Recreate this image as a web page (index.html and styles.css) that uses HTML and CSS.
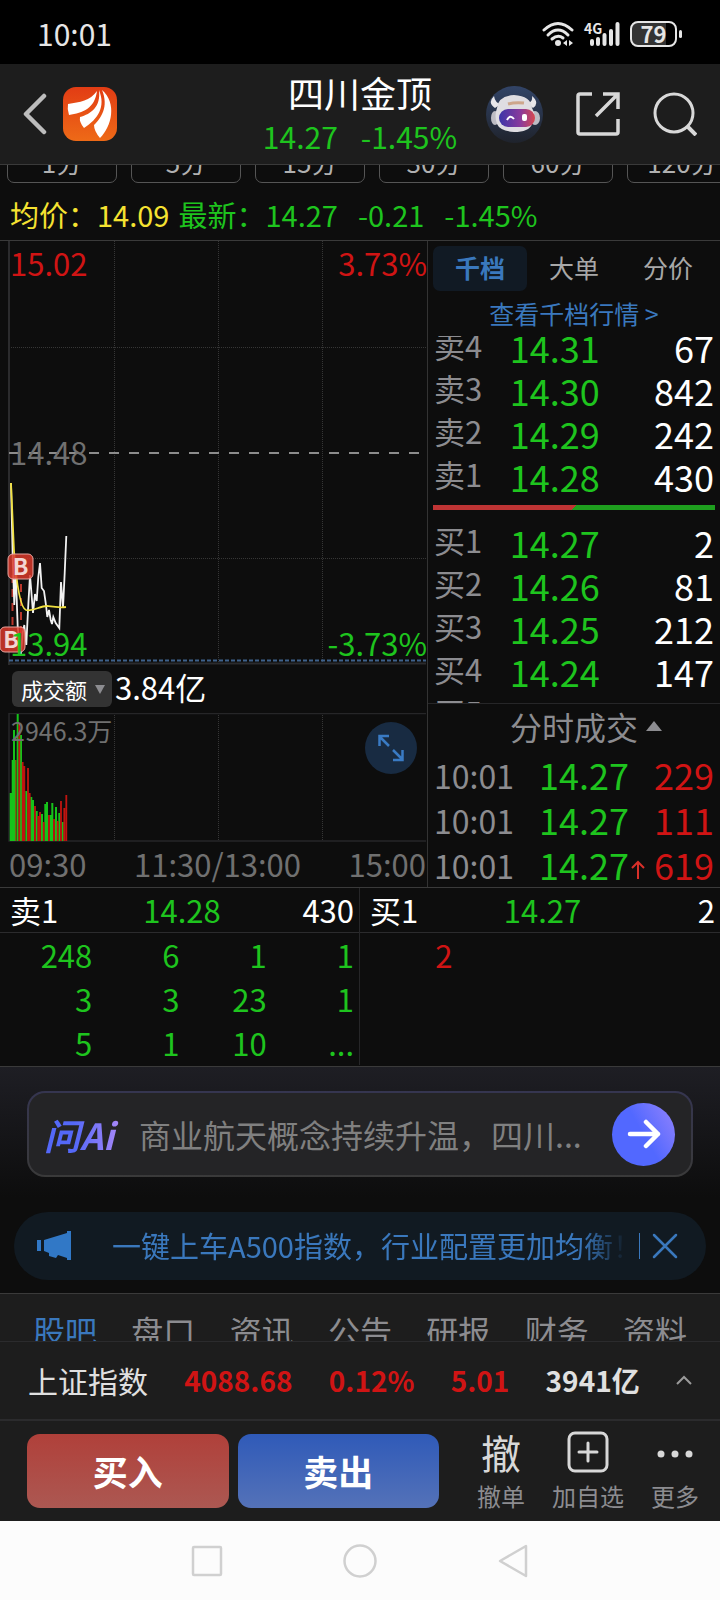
FILE: index.html
```html
<!DOCTYPE html>
<html lang="zh-CN">
<head>
    <meta charset="UTF-8">
    <meta name="viewport" content="width=device-width, initial-scale=1.0">
    <title>四川金顶</title>
    <link rel="stylesheet" href="styles.css">
</head>
<body>
    <div class="status-bar">
        <span>10:01</span>
        <div class="status-icons">
            <svg width="32" height="26" viewBox="0 0 32 26">
                <g fill="none" stroke="#e6e6e6" stroke-width="3" stroke-linecap="round">
                    <path d="M2 9Q16 -4 30 9"/>
                    <path d="M6 14Q16 4 26 14"/>
                    <path d="M10 18Q16 13 21 17"/>
                </g>
                <circle cx="16" cy="22" r="3" fill="#e6e6e6"/>
                <path d="M25 19v6l-4-3zM27 19v6l4-3z" fill="#e6e6e6"/>
            </svg>
            <div class="signal">
                <span class="signal-type">4G</span>
                <svg width="31" height="24" viewBox="0 0 31 24">
                    <path d="M3 19v3M9 17v5M15.500 13v9M22 9v13M28.500 2v20" stroke="#e6e6e6" stroke-width="4" stroke-linecap="round"/>
                </svg>
            </div>
            <span class="battery">79</span>
        </div>
    </div>

    <header class="header">
        <div class="header-left">
            <button type="button" class="icon-btn" aria-label="返回">
                <svg width="24" height="42" viewBox="0 0 24 42">
                    <path d="M21 3L3 21L21 39" fill="none" stroke="#bdbdbd" stroke-width="4.500" stroke-linecap="round" stroke-linejoin="round"/>
                </svg>
            </button>
            <svg width="54" height="54" viewBox="0 0 54 54">
                <defs>
                    <linearGradient id="logoBg" x1="0" y1="0" x2="0" y2="1">
                        <stop offset="0" stop-color="#e23c14"/>
                        <stop offset="1" stop-color="#ee6a17"/>
                    </linearGradient>
                </defs>
                <rect width="54" height="54" rx="13" fill="url(#logoBg)"/>
                <path d="M34 4C27 14 17 15 5 17Q4 22 6 28C20 26 32 21 34 4Z" fill="#fff"/>
                <path d="M36 3C38 20 28 27 17 30Q16 35 21 41C35 32 43 20 36 3Z" fill="#fff"/>
                <path d="M39 3C46 20 38 31 31 38Q31 44 37 51C49 39 54 16 39 3Z" fill="#fff"/>
            </svg>
        </div>
        <div class="header-title">
            <h1>四川金顶</h1>
            <div class="header-quote"><span>14.27</span><span>-1.45%</span></div>
        </div>
        <div class="header-right">
            <button type="button" class="icon-btn" aria-label="智能助手">
                <svg width="57" height="57" viewBox="0 0 57 57">
                    <defs>
                        <linearGradient id="robotBg" x1="0" y1="0" x2="0" y2="1">
                            <stop offset="0" stop-color="#324467"/>
                            <stop offset="1" stop-color="#1f232c"/>
                        </linearGradient>
                        <linearGradient id="visor">
                            <stop offset="0" stop-color="#3c36a8"/>
                            <stop offset="0.6" stop-color="#8a3a9c"/>
                            <stop offset="1" stop-color="#d8484e"/>
                        </linearGradient>
                    </defs>
                    <circle cx="28.500" cy="28.500" r="28.500" fill="url(#robotBg)"/>
                    <path d="M8 10Q1 17 9 22L15 18Q9 17 8 10ZM46 10Q54 17 47 22L41 17Q47 17 46 10Z" fill="#e8e6ea"/>
                    <ellipse cx="9" cy="32" rx="4" ry="7" fill="#bdbcc4"/>
                    <ellipse cx="49" cy="32" rx="5" ry="7" fill="#bdbcc4"/>
                    <path d="M11 22Q12 10 28 9Q45 10 46 22Q51 30 46 38Q43 46 28 46Q14 45 11 38Q8 30 11 22Z" fill="#dfdde2"/>
                    <path d="M22 18Q29 16 38 17" fill="none" stroke="#cda68c" stroke-width="3"/>
                    <rect x="13" y="23" width="36" height="18" rx="9" fill="url(#visor)"/>
                    <path d="M21 34Q24 28 28 33" fill="none" stroke="#fff" stroke-width="2"/>
                    <rect x="36" y="28" width="5" height="7" rx="2" fill="#fff"/>
                </svg>
            </button>
            <button type="button" class="icon-btn" aria-label="分享">
                <svg width="44" height="44" viewBox="0 0 44 44">
                    <path d="M16 2H4Q2 2 2 4V40Q2 42 4 42H40Q42 42 42 40V27M27 2H42V17M42 2L20 24" fill="none" stroke="#d8d8d8" stroke-width="3.500"/>
                </svg>
            </button>
            <button type="button" class="icon-btn" aria-label="搜索">
                <svg width="44" height="44" viewBox="0 0 44 44">
                    <circle cx="21" cy="21" r="19" fill="none" stroke="#d8d8d8" stroke-width="3"/>
                    <path d="M34 34L43 43" stroke="#d8d8d8" stroke-width="4"/>
                </svg>
            </button>
        </div>
    </header>

    <nav class="periods">
        <button type="button">1分</button>
        <button type="button">5分</button>
        <button type="button">15分</button>
        <button type="button">30分</button>
        <button type="button">60分</button>
        <button type="button">120分</button>
    </nav>

    <div class="summary">
        <span class="yellow">均价：14.09</span>
        <div class="summary-last green">
            <span>最新：14.27</span>
            <span>-0.21</span>
            <span>-1.45%</span>
        </div>
    </div>

    <main class="quote">
        <section class="chart">
            <div class="price-chart">
                <svg class="plot" viewBox="0 0 427 424" preserveAspectRatio="none">
                    <path d="M114.500 0V424M218.500 0V424M322.500 0V424M9 106.500H426M9 317.500H426" stroke="#363636" stroke-dasharray="1 1"/>
                    <path d="M9 0V424M9 422.500H426" fill="none" stroke="#2b2b2d" stroke-width="2"/>
                    <path d="M9 212H420" stroke="#8c8c8c" stroke-width="2" stroke-dasharray="10 10"/>
                    <path d="M9 419.500H426" stroke="#3f628c" stroke-width="2" stroke-dasharray="4 2"/>
                    <path d="M12.500 334V386M21 343V400" stroke="#b9372c" stroke-width="2" stroke-dasharray="8 6"/>
                    <polyline points="11,242 12.700,316 14.300,364 15.700,329 17.700,386 20.700,414 22.700,392 24.300,384 26.300,404 28,369 30,334 32,359 33,372 35,353 36.700,360 38.300,336 40,322 41.700,347 44,350 46,364 47.300,376 49,369 50.700,379 52,383 53.300,376 55.700,382 59.300,387 61,341 63,367 64.700,332 66.300,295" fill="none" stroke="#f2f2f2" stroke-width="1.800"/>
                    <path d="M11 242L14 310C17 350 21 367 26 369C32 371 40 365 47 365C54 366 60 367 66 366" fill="none" stroke="#f0e040" stroke-width="1.800"/>
                    <g fill="#d93a2b" fill-opacity="0.850" stroke="#e7a59f">
                        <rect x="8" y="313" width="25" height="25" rx="5"/>
                        <rect x="0" y="386" width="25" height="25" rx="5"/>
                    </g>
                    <g class="mark">
                        <text x="20.500" y="334">B</text>
                        <text x="11" y="407">B</text>
                    </g>
                </svg>
                <span class="axis axis-high red">15.02</span>
                <span class="axis axis-high axis-right red">3.73%</span>
                <span class="axis axis-mid">14.48</span>
                <span class="axis axis-low green">13.94</span>
                <span class="axis axis-low axis-right green">-3.73%</span>
            </div>
            <div class="turnover">
                <button type="button">成交额<i class="caret-down"></i></button>
                <span>3.84亿</span>
            </div>
            <div class="volume-chart">
                <svg class="plot" viewBox="0 0 427 129" preserveAspectRatio="none">
                    <path d="M114.500 0V128M218.500 0V128M322.500 0V128" stroke="#363636" stroke-dasharray="1 1"/>
                    <path d="M426 0.500H9V128H426" fill="none" stroke="#262628" stroke-width="1.500"/>
                    <path d="M10.700 128V80M12.700 128V47M14 128V17M17.700 128V1M21 128V22M26.300 128V78M31.300 128V84M33 128V87M36.700 128V98M42 128V101M45.300 128V91M47 128V89M50.700 128V102M52.300 128V90M56 128V94M59.300 128V100M62.700 128V109" stroke="#16c21a" stroke-width="2"/>
                    <path d="M19.300 128V10M22.700 128V49M24.300 128V53M28 128V55M29.700 128V80M35 128V93M38.300 128V103M40 128V99M43.700 128V109M49 128V102M54 128V106M57.700 128V108M61 128V88M64.300 128V95M66.300 128V82" stroke="#c01410" stroke-width="1.800"/>
                    <path d="M15.800 128V47" stroke="#7a6a12" stroke-width="1.500"/>
                </svg>
                <span class="volume-max">2946.3万</span>
                <button type="button" class="expand" aria-label="放大">
                    <svg width="28" height="28" viewBox="0 0 28 28">
                        <path d="M12 2H2.500V12M3 3L12 12M16 26H25.500V16M25 25L16 16" fill="none" stroke="#3a7bc4" stroke-width="2.500"/>
                    </svg>
                </button>
            </div>
            <div class="times">
                <span>09:30</span>
                <span>11:30/13:00</span>
                <span>15:00</span>
            </div>
        </section>

        <section class="side">
            <div class="side-tabs">
                <button type="button" class="active">千档</button>
                <button type="button">大单</button>
                <button type="button">分价</button>
            </div>
            <a href="#" class="more-levels">查看千档行情 &gt;</a>
            <div class="book">
                <table class="sell">
                    <tr><th>卖4</th><td>14.31</td><td>67</td></tr>
                    <tr><th>卖3</th><td>14.30</td><td>842</td></tr>
                    <tr><th>卖2</th><td>14.29</td><td>242</td></tr>
                    <tr><th>卖1</th><td>14.28</td><td>430</td></tr>
                </table>
                <div class="ratio"></div>
                <table class="buy">
                    <tr><th>买1</th><td>14.27</td><td>2</td></tr>
                    <tr><th>买2</th><td>14.26</td><td>81</td></tr>
                    <tr><th>买3</th><td>14.25</td><td>212</td></tr>
                    <tr><th>买4</th><td>14.24</td><td>147</td></tr>
                    <tr><th>买5</th><td></td><td></td></tr>
                </table>
            </div>
            <div class="trades">
                <h2>分时成交<i class="caret-up"></i></h2>
                <table>
                    <tr><th>10:01</th><td>14.27</td><td>229</td></tr>
                    <tr><th>10:01</th><td>14.27</td><td>111</td></tr>
                    <tr>
                        <th>10:01</th>
                        <td>14.27<svg class="up" width="14" height="20" viewBox="0 0 14 20"><path d="M7 19V2M1 8L7 2L13 8" fill="none" stroke="#d8302a" stroke-width="2"/></svg></td>
                        <td>619</td>
                    </tr>
                </table>
            </div>
        </section>
    </main>

    <section class="queues">
        <div class="queue">
            <div class="queue-head"><span>卖1</span><span class="green">14.28</span><span>430</span></div>
            <table class="green">
                <tr><td>248</td><td>6</td><td>1</td><td>1</td></tr>
                <tr><td>3</td><td>3</td><td>23</td><td>1</td></tr>
                <tr><td>5</td><td>1</td><td>10</td><td>...</td></tr>
            </table>
        </div>
        <div class="queue">
            <div class="queue-head"><span>买1</span><span class="green">14.27</span><span>2</span></div>
            <table class="red">
                <tr><td>2</td><td></td><td></td><td></td></tr>
            </table>
        </div>
    </section>

    <section class="promo">
        <form class="ask">
            <label for="question" class="ask-logo">问Ai</label>
            <input type="text" id="question" placeholder="商业航天概念持续升温，四川...">
            <button type="button" aria-label="提问">
                <svg width="34" height="30" viewBox="0 0 34 30">
                    <path d="M3 15H31M19 3L31 15L19 27" fill="none" stroke="#fff" stroke-width="4.500" stroke-linecap="round" stroke-linejoin="round"/>
                </svg>
            </button>
        </form>
        <div class="notice">
            <svg width="35" height="30" viewBox="0 0 35 30">
                <path d="M0 9H4V20H0ZM7 9L30 2V0H34V29H30V27L21 24L19 27L12 25V22L7 20Z" fill="#3178c6"/>
            </svg>
            <a href="#">一键上车A500指数，行业配置更加均衡！</a>
            <button type="button" class="icon-btn" aria-label="关闭">
                <svg width="26" height="26" viewBox="0 0 26 26">
                    <path d="M2 2L24 24M24 2L2 24" stroke="#3a78bd" stroke-width="2.500" stroke-linecap="round"/>
                </svg>
            </button>
        </div>
    </section>

    <nav class="sections">
        <a href="#" class="active">股吧</a>
        <a href="#">盘口</a>
        <a href="#">资讯</a>
        <a href="#">公告</a>
        <a href="#">研报</a>
        <a href="#">财务</a>
        <a href="#">资料</a>
    </nav>

    <div class="index-bar">
        <span>上证指数</span>
        <b class="red">4088.68</b>
        <b class="red">0.12%</b>
        <b class="red">5.01</b>
        <b>3941亿</b>
        <svg width="16" height="10" viewBox="0 0 16 10">
            <path d="M1 9L8 2L15 9" fill="none" stroke="#9a9a9a" stroke-width="2"/>
        </svg>
    </div>

    <footer class="actions">
        <button type="button" class="trade trade-buy">买入</button>
        <button type="button" class="trade trade-sell">卖出</button>
        <div class="tools">
            <button type="button"><span class="tool-icon">撤</span>撤单</button>
            <button type="button">
                <span class="tool-icon">
                    <svg width="42" height="42" viewBox="0 0 42 42">
                        <rect x="2" y="2" width="38" height="38" rx="6" fill="none" stroke="#d8d8d8" stroke-width="3"/>
                        <path d="M21 12V30M12 21H30" stroke="#d8d8d8" stroke-width="3" stroke-linecap="round"/>
                    </svg>
                </span>加自选
            </button>
            <button type="button">
                <span class="tool-icon">
                    <svg width="36" height="12" viewBox="0 0 36 12">
                        <g fill="#d8d8d8"><circle cx="4" cy="8" r="3.500"/><circle cx="18" cy="8" r="3.500"/><circle cx="32" cy="8" r="3.500"/></g>
                    </svg>
                </span>更多
            </button>
        </div>
    </footer>

    <div class="system-nav">
        <svg width="32" height="34" viewBox="0 0 32 34"><rect x="2" y="3" width="28" height="28" rx="1" fill="none" stroke="#d0d0d0" stroke-width="2.500"/></svg>
        <svg width="34" height="34" viewBox="0 0 34 34"><circle cx="17" cy="17" r="15.500" fill="none" stroke="#d0d0d0" stroke-width="2.500"/></svg>
        <svg width="32" height="34" viewBox="0 0 32 34"><path d="M29 2V32L3 17Z" fill="none" stroke="#d0d0d0" stroke-width="2.500" stroke-linejoin="round"/></svg>
    </div>
</body>
</html>
```

FILE: styles.css
```css
* {
    box-sizing: border-box;
}
body {
    margin: 0;
    background-color: #0d0d0d;
    color: #fff;
    font-family: "Noto Sans CJK SC", sans-serif;
    font-size: 30px;
    line-height: 44px;
}
button {
    margin: 0;
    padding: 0;
    border: none;
    background: none;
    color: inherit;
    font: inherit;
}
a {
    color: inherit;
    text-decoration: none;
}
svg {
    display: block;
}
table {
    width: 100%;
    border-collapse: collapse;
    table-layout: fixed;
}
th,
td {
    padding: 0;
    font-weight: normal;
    text-align: left;
    white-space: nowrap;
}
.red {
    color: #d01414;
}
.green {
    color: #1ec41e;
}
.yellow {
    color: #f5e231;
}

/* status bar */
.status-bar {
    display: flex;
    justify-content: space-between;
    align-items: center;
    height: 64px;
    padding: 2px 38px 0 37px;
    background-color: #000;
    color: #e6e6e6;
}
.status-icons {
    display: flex;
    align-items: center;
    gap: 10px;
    padding-top: 2px;
}
.signal {
    position: relative;
    padding-left: 5px;
}
.signal-type {
    position: absolute;
    left: 0;
    top: 0;
    font-size: 14px;
    line-height: 12px;
    font-weight: bold;
}
.battery {
    position: relative;
    width: 47px;
    height: 26px;
    margin-right: 5px;
    border: 2px solid #e6e6e6;
    border-radius: 8px;
    background: linear-gradient(to right, #333 79%, #000 79%);
    font-size: 22px;
    line-height: 20px;
    font-weight: bold;
    text-align: center;
}
.battery::after {
    content: "";
    position: absolute;
    right: -7px;
    top: 7px;
    width: 3px;
    height: 8px;
    border-radius: 2px;
    background-color: #e6e6e6;
}

/* header */
.header {
    display: grid;
    grid-template-columns: 1fr auto 1fr;
    align-items: center;
    height: 101px;
    padding: 0 23px;
    background-color: #1d1d1d;
    border-bottom: 1px solid #3a3a3a;
}
.header-left {
    display: flex;
    align-items: center;
    gap: 16px;
}
.header-title {
    text-align: center;
}
.header-title h1 {
    margin: 0;
    font-size: 36px;
    line-height: 44px;
    font-weight: normal;
}
.header-quote {
    display: flex;
    justify-content: center;
    gap: 23px;
    color: #1ec41e;
}
.header-right {
    display: flex;
    justify-content: flex-end;
    align-items: center;
    gap: 33px;
}

/* period buttons, scrolled half out of view */
.periods {
    display: flex;
    align-items: flex-end;
    gap: 14px;
    height: 18px;
    padding-left: 7px;
    overflow: hidden;
}
.periods button {
    flex: none;
    width: 110px;
    height: 44px;
    border: 1px solid #555;
    border-radius: 7px;
    color: #b0b0b0;
    font-size: 26px;
}

.summary {
    display: flex;
    gap: 9px;
    height: 57px;
    padding: 9px 10px 0;
    font-size: 29px;
}
.summary-last {
    display: flex;
    gap: 20px;
}

/* chart + order book */
.quote {
    display: grid;
    grid-template-columns: 428fr 292fr;
    border-top: 1px solid #3a3a3a;
    border-bottom: 1px solid #3a3a3a;
}
.chart {
    border-right: 1px solid #333;
}
.price-chart,
.volume-chart {
    position: relative;
}
.plot {
    width: 100%;
}
.price-chart .plot {
    height: 424px;
}
.mark {
    fill: #f3d6d3;
    font-size: 23px;
    font-weight: bold;
    text-anchor: middle;
}
.axis {
    position: absolute;
    left: 10px;
    font-size: 31px;
}
.axis-right {
    left: auto;
    right: 0;
}
.axis-high {
    top: 0;
}
.axis-mid {
    top: 189px;
    color: #707070;
}
.axis-low {
    bottom: 0;
}
.turnover {
    display: flex;
    gap: 3px;
    height: 48px;
    padding-left: 12px;
    font-size: 31px;
}
.turnover button {
    display: flex;
    align-items: center;
    gap: 8px;
    height: 36px;
    margin-top: 6px;
    padding: 0 7px 0 9px;
    border-radius: 6px;
    background-color: #333;
    font-size: 22px;
}
.caret-down,
.caret-up {
    border: 5px solid transparent;
}
.caret-down {
    border-top: 9px solid #8c8c90;
    border-bottom: none;
}
.caret-up {
    border-width: 8px;
    border-top: none;
    border-bottom: 10px solid #8c8c90;
}
.volume-chart .plot {
    height: 129px;
}
.volume-max {
    position: absolute;
    left: 11px;
    top: 0;
    color: #707070;
    font-size: 25px;
    line-height: 34px;
}
.expand {
    position: absolute;
    right: 10px;
    top: 9px;
    display: grid;
    place-items: center;
    width: 52px;
    height: 52px;
    border-radius: 50%;
    background-color: #182b42;
}
.times {
    display: flex;
    justify-content: space-between;
    padding: 0 1px 1px 9px;
    color: #707070;
    font-size: 31px;
}
.side-tabs {
    display: grid;
    grid-template-columns: 1fr 1fr 1fr;
    padding: 5px 5px 0;
    color: #a8a8a8;
    font-size: 25px;
    line-height: 42px;
}
.side-tabs button {
    height: 45px;
    padding-bottom: 3px;
    border-radius: 7px;
}
.side-tabs .active {
    background-color: #111a24;
    color: #3a78bd;
    font-weight: bold;
}
.more-levels {
    display: block;
    height: 45px;
    color: #3a78bd;
    font-size: 25px;
    text-align: center;
}
.book {
    height: 368px;
    border-bottom: 1px solid #262628;
    overflow: hidden;
}
.book td,
.trades td {
    color: #1ec41e;
    font-size: 36px;
}
.book th {
    width: 28%;
    padding-left: 6px;
    color: #8c8c90;
    font-size: 31px;
    line-height: 38px;
    vertical-align: top;
}
.book td {
    height: 43px;
    line-height: 43px;
}
.book td:last-child,
.trades td:last-child {
    padding-right: 6px;
    text-align: right;
}
.book td:last-child {
    color: #fff;
}
.sell {
    margin-top: -10px;
}
.ratio {
    height: 5px;
    margin: 7px 5px 11px;
    background: linear-gradient(135deg, #bf3434 50%, #1e9e1e 50%);
}
.trades h2 {
    display: flex;
    justify-content: center;
    align-items: center;
    gap: 8px;
    margin: 0;
    padding: 0 0 4px 24px;
    color: #8c8c90;
    font-size: 32px;
    font-weight: normal;
}
.trades th {
    width: 38%;
    padding-left: 6px;
    color: #8c8c90;
    font-size: 32px;
}
.trades td {
    line-height: 45px;
}
.trades td:last-child {
    width: 25%;
    color: #d01414;
}
.up {
    display: inline-block;
    margin-left: 2px;
}

/* order queues */
.queues {
    display: grid;
    grid-template-columns: 1fr 1fr;
    padding-bottom: 1px;
    border-bottom: 1px solid #3a3a3a;
    font-size: 31px;
}
.queue:first-child {
    border-right: 1px solid #262628;
}
.queue-head {
    display: grid;
    grid-template-columns: 1fr auto 1fr;
    padding: 0 5px 0 10px;
    border-bottom: 1px solid #2b2b2d;
}
.queue-head span:last-child {
    text-align: right;
}
.queue table {
    width: calc(100% - 10px);
    margin-left: 10px;
}
.queue td {
    padding-right: 5px;
    text-align: right;
}

/* ask box and notice */
.promo {
    padding: 24px 14px 13px;
    background: linear-gradient(#1e1e24, #0d0d0d 130px);
    border-bottom: 1px solid #3a3a3a;
}
.ask {
    display: flex;
    align-items: center;
    gap: 19px;
    height: 86px;
    margin: 0 13px 35px;
    padding: 0 16px 0 15px;
    border: 2px solid transparent;
    border-radius: 18px;
    background: linear-gradient(#242426, #242426) padding-box, linear-gradient(#353550, #3a3a3a) border-box;
}
.ask-logo {
    padding-right: 6px;
    background: linear-gradient(to right, #5468f8 40%, #a888f8);
    -webkit-background-clip: text;
    background-clip: text;
    color: transparent;
    font-size: 36px;
    font-weight: bold;
    font-style: italic;
}
.ask input {
    flex: 1;
    min-width: 0;
    padding: 0;
    border: none;
    background: none;
    color: #fff;
    font: inherit;
    font-size: 32px;
}
.ask input::placeholder {
    color: #808080;
    opacity: 1;
}
.ask button {
    display: grid;
    place-items: center;
    width: 63px;
    height: 63px;
    border-radius: 50%;
    background: linear-gradient(60deg, #5268ff 50%, #9484fc);
}
.notice {
    display: flex;
    align-items: center;
    height: 68px;
    padding: 0 28px 0 23px;
    border-radius: 34px;
    background-color: #111a22;
    color: #3a78bd;
    font-size: 29px;
}
.notice a {
    flex: 1;
    margin: 0 12px 0 40px;
    padding-bottom: 3px;
    overflow: hidden;
    white-space: nowrap;
    -webkit-mask-image: linear-gradient(to left, transparent, #000 45px);
    mask-image: linear-gradient(to left, transparent, #000 45px);
}
.notice button {
    padding-left: 12px;
    border-left: 1px solid #3a78bd;
}

/* bottom bars */
.sections {
    display: flex;
    justify-content: space-between;
    height: 48px;
    padding: 14px 33px 0 33px;
    overflow: hidden;
    background-color: #1d1d1d;
    border-bottom: 1px solid #2b2b2d;
    color: #8c8c90;
    font-size: 32px;
}
.sections .active {
    color: #3a78bd;
}
.index-bar {
    display: flex;
    justify-content: space-between;
    align-items: center;
    height: 79px;
    padding: 0 28px 2px;
    background-color: #1d1d1d;
    border-bottom: 2px solid #2b2b2d;
    color: #e0e0e0;
}
.index-bar b {
    font-size: 28px;
}
.actions {
    display: flex;
    align-items: center;
    gap: 9px;
    height: 100px;
    padding: 0 21px 0 27px;
    background-color: #1d1d1d;
}
.trade {
    flex: 1;
    height: 74px;
    border-radius: 13px;
    font-size: 35px;
    font-weight: bold;
}
.trade-buy {
    background: linear-gradient(#b0403a, #ac5852);
}
.trade-sell {
    background: linear-gradient(#2f5ab8, #5472b8);
}
.tools {
    display: flex;
    gap: 27px;
    margin-left: 29px;
    color: #8c8c90;
    font-size: 24px;
    line-height: 30px;
}
.tool-icon {
    display: grid;
    place-items: center;
    height: 42px;
    margin-bottom: 8px;
    color: #d8d8d8;
    font-size: 40px;
}
.system-nav {
    display: flex;
    justify-content: center;
    align-items: center;
    gap: 120px;
    height: 79px;
    background-color: #fcfcfc;
}
```
